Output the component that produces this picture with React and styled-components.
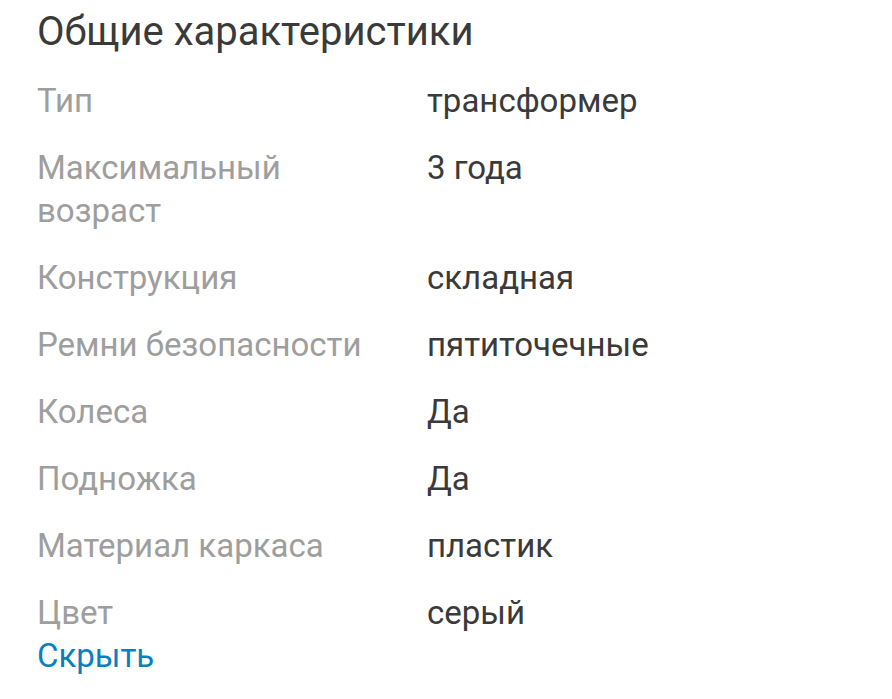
import React from "react";
import styled, { createGlobalStyle } from "styled-components";

const Global = createGlobalStyle`
  html, body { margin: 0; padding: 0; background: #ffffff; }
  body { font-family: Roboto, "Noto Sans", Arial, sans-serif; }
`;

const Section = styled.section`
  padding: 8px 0 0 37px;
  display: flex;
  flex-direction: column;
`;

const Title = styled.h2`
  margin: 0 0 24px;
  font-size: 40px;
  line-height: 47px;
  font-weight: 400;
  color: #3a3a3a;
`;

const List = styled.dl`
  margin: 0;
  display: grid;
  grid-template-columns: 390px 1fr;
  row-gap: 24px;
`;

const Label = styled.dt`
  margin: 0;
  font-size: 33px;
  line-height: 43px;
  color: #9e9e9e;
  max-width: 350px;
`;

const Value = styled.dd`
  margin: 0;
  font-size: 33px;
  line-height: 43px;
  color: #3a3a3a;
`;

const Toggle = styled.a`
  font-size: 33px;
  line-height: 43px;
  color: #0a7fbf;
  text-decoration: none;
  cursor: pointer;
`;

const specs = [
  ["Тип", "трансформер"],
  ["Максимальный возраст", "3 года"],
  ["Конструкция", "складная"],
  ["Ремни безопасности", "пятиточечные"],
  ["Колеса", "Да"],
  ["Подножка", "Да"],
  ["Материал каркаса", "пластик"],
  ["Цвет", "серый"],
];

export default function App() {
  return (
    <>
      <Global />
      <Section>
        <Title>Общие характеристики</Title>
        <List>
          {specs.map(([k, v]) => (
            <React.Fragment key={k}>
              <Label>{k}</Label>
              <Value>{v}</Value>
            </React.Fragment>
          ))}
        </List>
        <Toggle>Скрыть</Toggle>
      </Section>
    </>
  );
}
